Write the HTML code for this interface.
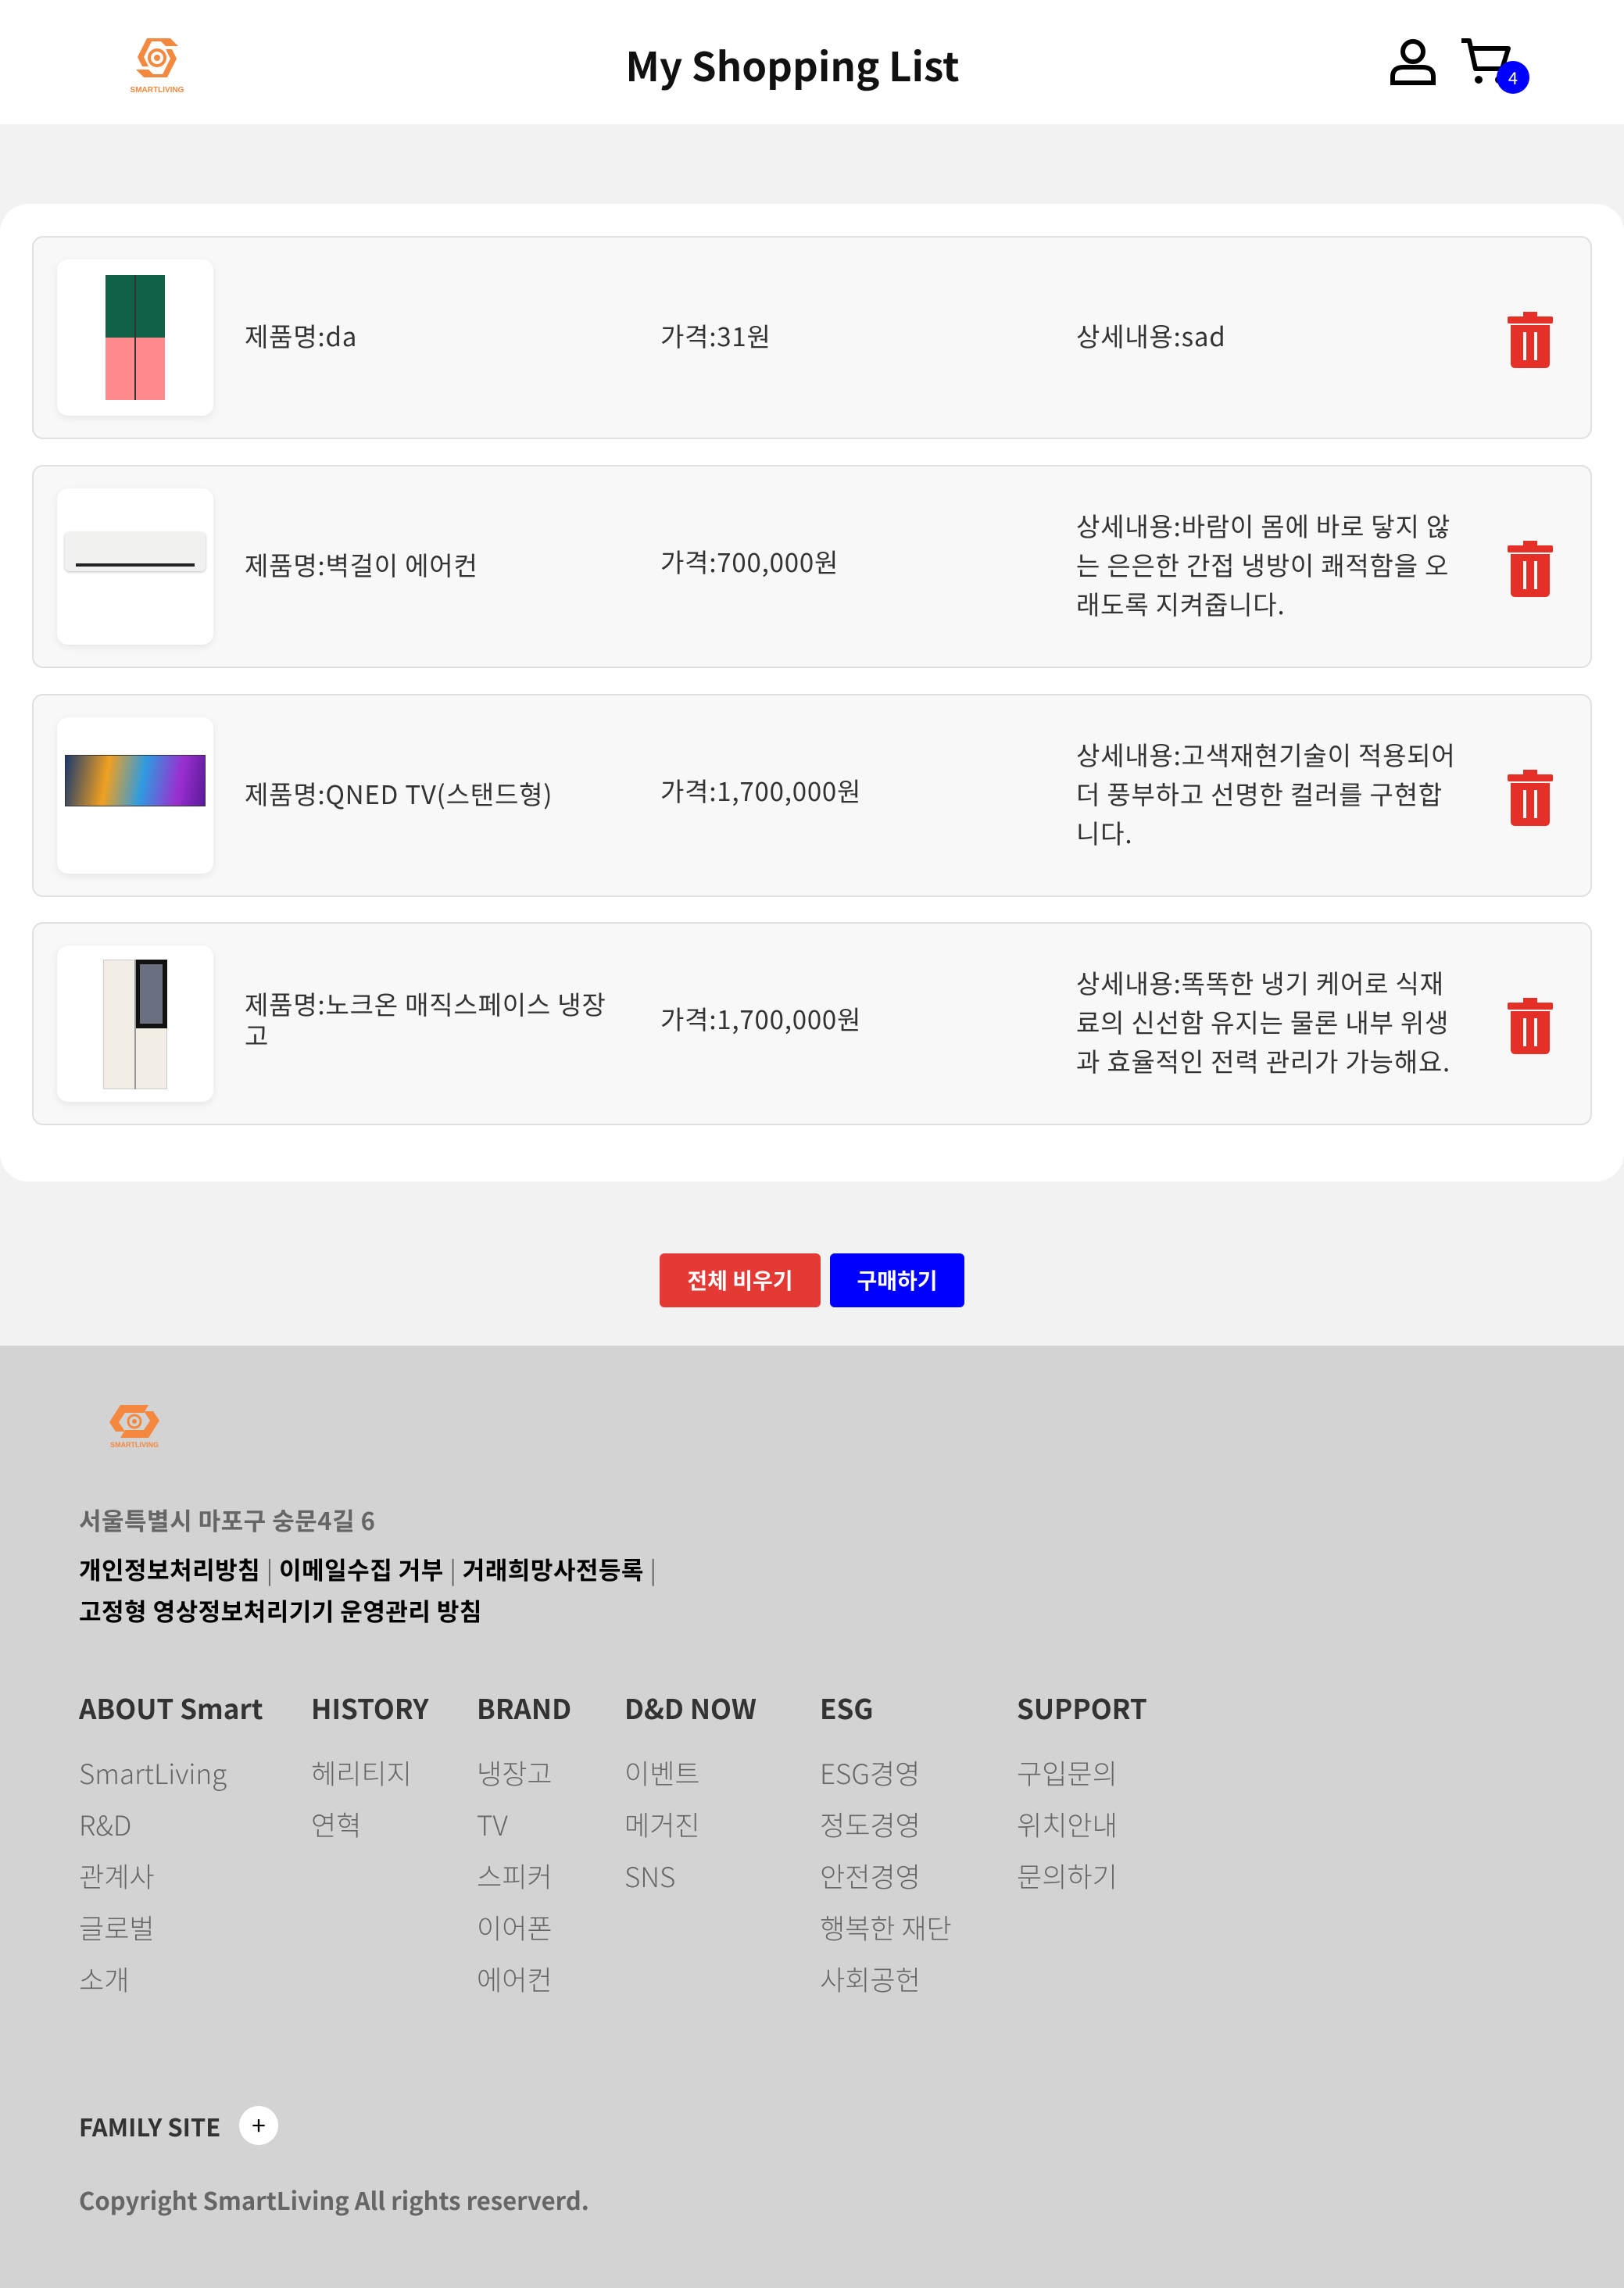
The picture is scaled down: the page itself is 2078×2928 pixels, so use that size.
<!DOCTYPE html>
<html><head><meta charset="utf-8"><style>
*{margin:0;padding:0;box-sizing:border-box}
body{width:2078px;height:2928px;position:relative;background:#f2f2f2;font-family:"Noto Sans CJK KR","Liberation Sans",sans-serif;overflow:hidden}
.a{position:absolute;white-space:nowrap}
.hdr{position:absolute;left:0;top:0;width:2078px;height:159px;background:#fff}
.card{position:absolute;left:0;top:261px;width:2078px;height:1251px;background:#fff;border-radius:36px}
.item{position:absolute;left:41px;width:1996px;height:260px;background:#f8f8f8;border:2px solid #e0e0e0;border-radius:14px}
.img{position:absolute;left:30px;top:28px;width:200px;height:200px;background:#fff;border-radius:14px;box-shadow:0 3px 10px rgba(0,0,0,.08);overflow:hidden}
.t{position:absolute;font-size:33px;color:#333;line-height:50px;letter-spacing:0.8px;word-break:break-all}
.trash{position:absolute;left:1886px;top:95px}
.foot{position:absolute;left:0;top:1722px;width:2078px;height:1206px;background:#d3d3d3}
.h{position:absolute;top:2160px;font-size:35px;font-weight:bold;color:#333}
.l{position:absolute;font-size:35px;color:#666;font-weight:300;line-height:66px}
</style></head><body>
<div class="hdr"></div>
<svg class="a" style="left:160px;top:45px" width="82" height="78" viewBox="0 0 82 78">
<polygon points="28,4 58,4 68,14 52,14 46,8 34,8 24,28 30,40 22,40 16,28" fill="#f5883f"/>
<polygon points="54,54 24,54 14,44 30,44 36,50 48,50 58,30 52,18 60,18 66,30" fill="#f5883f"/>
<circle cx="41" cy="29" r="10" fill="none" stroke="#f5883f" stroke-width="4"/><circle cx="41" cy="29" r="4" fill="#f5883f"/>
<text x="41" y="73" font-size="10" fill="#f5883f" text-anchor="middle" font-family="Liberation Sans" font-weight="bold">SMARTLIVING</text></svg>
<div class="a" style="left:0;width:2028px;text-align:center;top:46px;font-size:51px;font-weight:bold;color:#111;line-height:72px">My Shopping List</div>
<svg class="a" style="left:1776px;top:48px" width="64" height="62" viewBox="0 0 64 62"><circle cx="32" cy="18" r="13" fill="none" stroke="#000" stroke-width="6"/><path d="M6 58 V50 Q6 38 20 38 H44 Q58 38 58 50 V58 Z" fill="none" stroke="#000" stroke-width="6"/></svg>
<svg class="a" style="left:1868px;top:48px" width="68" height="64" viewBox="0 0 68 64"><path d="M2 4 H12 L20 40 H54 L62 14 H16" fill="none" stroke="#000" stroke-width="6" stroke-linejoin="round"/><circle cx="24" cy="54" r="5"/><circle cx="50" cy="54" r="5"/></svg>
<div class="a" style="left:1915px;top:78px;width:42px;height:42px;border-radius:50%;background:#00f;color:#fff;font-size:22px;text-align:center;line-height:42px">4</div>

<div class="card"></div>

<div class="item" style="top:302px">
<div class="img"><div style="position:absolute;left:62px;top:20px;width:76px;height:80px;background:#116149"></div><div style="position:absolute;left:62px;top:100px;width:76px;height:80px;background:#ff8a8e"></div><div style="position:absolute;left:99px;top:20px;width:2px;height:160px;background:#333"></div></div>
<div class="t" style="left:270px;top:100px">제품명:da</div>
<div class="t" style="left:802px;top:100px">가격:31원</div>
<div class="t" style="left:1334px;top:100px">상세내용:sad</div>
<svg class="trash" width="58" height="72" viewBox="0 0 58 72"><rect x="20" y="0" width="18" height="6" fill="#e53027"/><rect x="0" y="6" width="58" height="9" rx="2" fill="#e53027"/><path d="M4 17 H54 V66 Q54 72 48 72 H10 Q4 72 4 66 Z" fill="#e53027"/><rect x="20" y="26" width="4" height="36" fill="#fff"/><rect x="34" y="26" width="4" height="36" fill="#fff"/></svg>
</div>

<div class="item" style="top:595px">
<div class="img"><div style="position:absolute;left:10px;top:56px;width:180px;height:50px;background:#f1f1f0;border-radius:6px;box-shadow:0 1px 3px #bbb"></div><div style="position:absolute;left:24px;top:96px;width:152px;height:4px;background:#222"></div></div>
<div class="t" style="left:270px;top:100px">제품명:벽걸이 에어컨</div>
<div class="t" style="left:802px;top:96px">가격:700,000원</div>
<div class="t" style="left:1334px;top:50px;white-space:normal;width:496px">상세내용:바람이 몸에 바로 닿지 않는 은은한 간접 냉방이 쾌적함을 오래도록 지켜줍니다.</div>
<svg class="trash" width="58" height="72" viewBox="0 0 58 72"><rect x="20" y="0" width="18" height="6" fill="#e53027"/><rect x="0" y="6" width="58" height="9" rx="2" fill="#e53027"/><path d="M4 17 H54 V66 Q54 72 48 72 H10 Q4 72 4 66 Z" fill="#e53027"/><rect x="20" y="26" width="4" height="36" fill="#fff"/><rect x="34" y="26" width="4" height="36" fill="#fff"/></svg>
</div>

<div class="item" style="top:888px">
<div class="img"><div style="position:absolute;left:10px;top:48px;width:180px;height:66px;background:linear-gradient(100deg,#1c3a6e 0%,#f0a020 30%,#2f9be0 55%,#9b2fd0 80%,#5a1a9a 100%);border:1px solid #333"></div></div>
<div class="t" style="left:270px;top:100px">제품명:QNED TV(스탠드형)</div>
<div class="t" style="left:802px;top:96px">가격:1,700,000원</div>
<div class="t" style="left:1334px;top:50px;white-space:normal;width:496px">상세내용:고색재현기술이 적용되어 더 풍부하고 선명한 컬러를 구현합니다.</div>
<svg class="trash" width="58" height="72" viewBox="0 0 58 72"><rect x="20" y="0" width="18" height="6" fill="#e53027"/><rect x="0" y="6" width="58" height="9" rx="2" fill="#e53027"/><path d="M4 17 H54 V66 Q54 72 48 72 H10 Q4 72 4 66 Z" fill="#e53027"/><rect x="20" y="26" width="4" height="36" fill="#fff"/><rect x="34" y="26" width="4" height="36" fill="#fff"/></svg>
</div>

<div class="item" style="top:1180px">
<div class="img"><div style="position:absolute;left:59px;top:18px;width:82px;height:166px;background:#f2eee6;border:1px solid #ccc"></div><div style="position:absolute;left:100px;top:18px;width:41px;height:88px;background:#111"></div><div style="position:absolute;left:106px;top:24px;width:29px;height:76px;background:#6a7080"></div><div style="position:absolute;left:99px;top:18px;width:2px;height:166px;background:#999"></div></div>
<div class="t" style="left:270px;top:82px;white-space:normal;width:470px;line-height:40px">제품명:노크온 매직스페이스 냉장고</div>
<div class="t" style="left:802px;top:96px">가격:1,700,000원</div>
<div class="t" style="left:1334px;top:50px;white-space:normal;width:496px">상세내용:똑똑한 냉기 케어로 식재료의 신선함 유지는 물론 내부 위생과 효율적인 전력 관리가 가능해요.</div>
<svg class="trash" width="58" height="72" viewBox="0 0 58 72"><rect x="20" y="0" width="18" height="6" fill="#e53027"/><rect x="0" y="6" width="58" height="9" rx="2" fill="#e53027"/><path d="M4 17 H54 V66 Q54 72 48 72 H10 Q4 72 4 66 Z" fill="#e53027"/><rect x="20" y="26" width="4" height="36" fill="#fff"/><rect x="34" y="26" width="4" height="36" fill="#fff"/></svg>
</div>

<div class="a" style="left:844px;top:1604px;width:206px;height:69px;background:#e53935;border-radius:6px;color:#fff;font-weight:bold;font-size:28px;text-align:center;line-height:69px">전체 비우기</div>
<div class="a" style="left:1062px;top:1604px;width:172px;height:69px;background:#0000ff;border-radius:6px;color:#fff;font-weight:bold;font-size:28px;text-align:center;line-height:69px">구매하기</div>

<div class="foot"></div>
<svg class="a" style="left:124px;top:1796px" width="96" height="58" viewBox="0 0 96 58">
<polygon points="30,2 66,2 60,12 36,12 28,24 36,36 24,36 16,24" fill="#f5883f"/>
<polygon points="66,44 30,44 36,34 60,34 68,22 60,10 72,10 80,22" fill="#f5883f"/>
<circle cx="48" cy="23" r="8" fill="none" stroke="#f5883f" stroke-width="3"/><circle cx="48" cy="23" r="3" fill="#f5883f"/>
<text x="48" y="56" font-size="9" fill="#f5883f" text-anchor="middle" font-family="Liberation Sans" font-weight="bold">SMARTLIVING</text></svg>
<div class="a" style="left:101px;top:1922px;font-size:31px;font-weight:bold;color:#666;letter-spacing:0.5px">서울특별시 마포구 숭문4길 6</div>
<div class="a" style="left:101px;top:1985px;font-size:31px;font-weight:bold;color:#000;letter-spacing:0.5px">개인정보처리방침 <span style="color:#666;font-weight:normal">|</span> 이메일수집 거부 <span style="color:#666;font-weight:normal">|</span> 거래희망사전등록 <span style="color:#666;font-weight:normal">|</span></div>
<div class="a" style="left:101px;top:2038px;font-size:31px;font-weight:bold;color:#000;letter-spacing:0.5px">고정형 영상정보처리기기 운영관리 방침</div>

<div class="h" style="left:101px">ABOUT Smart</div>
<div class="h" style="left:398px">HISTORY</div>
<div class="h" style="left:610px">BRAND</div>
<div class="h" style="left:799px">D&amp;D NOW</div>
<div class="h" style="left:1049px">ESG</div>
<div class="h" style="left:1301px">SUPPORT</div>
<div class="l" style="left:101px;top:2236px">SmartLiving<br>R&amp;D<br>관계사<br>글로벌<br>소개</div>
<div class="l" style="left:398px;top:2236px">헤리티지<br>연혁</div>
<div class="l" style="left:610px;top:2236px">냉장고<br>TV<br>스피커<br>이어폰<br>에어컨</div>
<div class="l" style="left:799px;top:2236px">이벤트<br>메거진<br>SNS</div>
<div class="l" style="left:1049px;top:2236px">ESG경영<br>정도경영<br>안전경영<br>행복한 재단<br>사회공헌</div>
<div class="l" style="left:1301px;top:2236px">구입문의<br>위치안내<br>문의하기</div>

<div class="a" style="left:101px;top:2698px;font-size:31px;font-weight:bold;color:#333">FAMILY SITE</div>
<div class="a" style="left:306px;top:2695px;width:50px;height:50px;border-radius:50%;background:#fff;text-align:center;line-height:48px;font-size:32px;color:#000">+</div>
<div class="a" style="left:101px;top:2792px;font-size:31px;font-weight:bold;color:#666">Copyright SmartLiving All rights reserverd.</div>
</body></html>
